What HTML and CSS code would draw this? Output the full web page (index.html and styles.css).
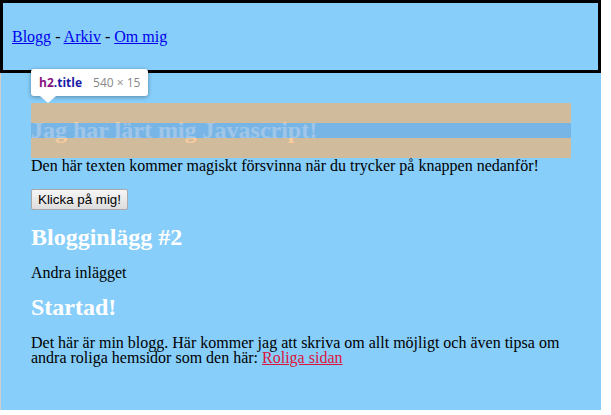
FILE: index.html
```html
<!DOCTYPE html>
<html lang="sv">
<head>
    <meta charset="UTF-8">
    <meta name="viewport" content="width=device-width, initial-scale=1.0">
    <title>Min blogg</title>
    <link rel="stylesheet" href="styles.css">
    <script>
        function hideText() {
            document.getElementById('magic').style.display = 'none';
        }
    </script>
</head>
<body>
<div class="page">
    <header class="site-header">
        <p class="nav"><a href="#">Blogg</a> - <a href="#">Arkiv</a> - <a href="#">Om mig</a></p>
    </header>

    <main class="content">
        <h2 class="title">Jag har lärt mig Javascript!</h2>
        <p id="magic">Den här texten kommer magiskt försvinna när du trycker på knappen nedanför!</p>
        <button class="btn" onclick="hideText()">Klicka på mig!</button>

        <h2>Blogginlägg #2</h2>
        <p>Andra inlägget</p>

        <h2>Startad!</h2>
        <p>Det här är min blogg. Här kommer jag att skriva om allt möjligt och även tipsa om andra roliga hemsidor som den här: <a class="fun" href="#">Roliga sidan</a></p>
    </main>

    <!-- inspector tooltip -->
    <div class="inspect-tip"><span class="tag">h2</span><span class="cls">.title</span><span class="size">540 × 15</span></div>
</div>
</body>
</html>
```

FILE: styles.css
```css
body {
    margin: 0;
    background: #fff;
    font-family: "Liberation Serif", "Times New Roman", serif;
    font-size: 16px;
    line-height: 15px;
    color: #000;
}
.page {
    position: relative;
    width: 601px;
    height: 410px;
    background: linear-gradient(to right, #cfcfcf 1px, #87cefa 1px);
}
.site-header {
    border: 3px solid #000;
    padding: 10px 9px;
}
.nav {
    margin: 16px 0;
}
.nav a {
    color: #0000ee;
}
.content {
    padding: 30px 30px 0 31px;
}
h2 {
    font-size: 24px;
    margin: 20px 0;
    color: #fff;
}
p {
    margin: 16px 0;
}
.title {
    position: relative;
}
.title::after {
    content: "";
    position: absolute;
    top: -20px;
    bottom: -20px;
    left: 0;
    right: 0;
    background: linear-gradient(to bottom,
        rgba(246, 178, 107, 0.66) 0, rgba(246, 178, 107, 0.66) 20px,
        rgba(111, 168, 220, 0.66) 20px, rgba(111, 168, 220, 0.66) calc(100% - 20px),
        rgba(246, 178, 107, 0.66) calc(100% - 20px));
}
.btn {
    font-family: "Liberation Sans", Arial, sans-serif;
    font-size: 13.33px;
    line-height: 15px;
    height: 21px;
    padding: 1px 6px;
    color: #000;
    background: linear-gradient(to bottom, #f6f6f6, #dddddd);
    border: 1px solid #a9a9a9;
    border-radius: 2px;
    vertical-align: top;
}
.fun {
    color: #dc143c;
}
.inspect-tip {
    position: absolute;
    left: 31px;
    top: 69px;
    height: 27px;
    padding: 0 8px;
    display: flex;
    align-items: center;
    background: #fff;
    border-radius: 3px;
    box-shadow: 0 1px 4px rgba(0, 0, 0, 0.35);
    font-family: "Open Sans", "Noto Sans", sans-serif;
    font-size: 12px;
    line-height: 1;
}
.inspect-tip::after {
    content: "";
    position: absolute;
    left: 9px;
    top: 27px;
    border-left: 8px solid transparent;
    border-right: 8px solid transparent;
    border-top: 7px solid #fff;
}
.tag {
    color: #881280;
    font-weight: bold;
}
.cls {
    color: #1a1aa6;
    font-weight: bold;
}
.size {
    color: #888;
    margin-left: 11px;
}
```
